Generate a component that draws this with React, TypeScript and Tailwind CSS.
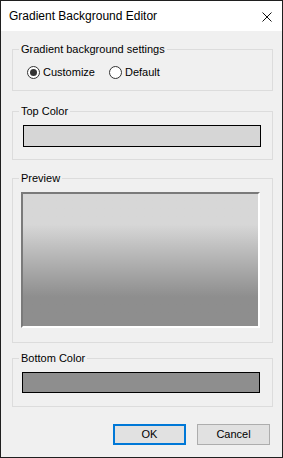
import React from 'react';

function Radio({ checked, label }: { checked?: boolean; label: string }) {
  return (
    <label className="flex items-center gap-[3px]">
      <span className="flex h-[13px] w-[13px] items-center justify-center rounded-full border border-[#333333] bg-white">
        {checked && <span className="h-[7px] w-[7px] rounded-full bg-[#333333]" />}
      </span>
      <span>{label}</span>
    </label>
  );
}

function Group({ title, className, children }: { title: string; className: string; children: React.ReactNode }) {
  return (
    <fieldset className={`w-[261px] border border-[#dcdcdc] px-[6px] ${className}`}>
      <legend className="px-[2px] leading-[14px]">{title}</legend>
      {children}
    </fieldset>
  );
}

export default function App() {
  return (
    <div className="flex h-[458px] w-[283px] flex-col border border-[#1f1f1f] bg-[#f0f0f0] text-[11px] text-black [font-family:'Liberation_Sans',Arial,sans-serif]">
      <div className="flex h-[30px] shrink-0 items-center justify-between bg-white pl-[8px] pr-[10px]">
        <span className="text-[12px]">Gradient Background Editor</span>
        <svg width="10" height="10" viewBox="0 0 10 10" className="mt-[1px]">
          <path d="M0.5 0.5 L9.5 9.5 M9.5 0.5 L0.5 9.5" stroke="#111" strokeWidth="1" />
        </svg>
      </div>

      <div className="flex flex-col pl-[11px]">
        <Group title="Gradient background settings" className="mt-[11px] h-[49px]">
          <div className="ml-[8px] mt-[8px] flex items-center gap-[14px]">
            <Radio checked label="Customize" />
            <Radio label="Default" />
          </div>
        </Group>

        <Group title="Top Color" className="mt-[13px] h-[56px]">
          <div className="ml-[4px] mt-[7px] h-[22px] w-[238px] border border-black bg-[#d6d6d6]" />
        </Group>

        <Group title="Preview" className="mt-[11px] h-[172px]">
          <div className="ml-[2px] mt-[7px] h-[136px] w-[239px] border-2 border-t-[#7a7a7a] border-l-[#7a7a7a] border-b-white border-r-white bg-linear-to-b from-[#d7d7d7] from-23% to-[#8e8e8e] to-78%" />
        </Group>

        <Group title="Bottom Color" className="mt-[8px] h-[56px]">
          <div className="ml-[3px] mt-[7px] h-[21px] w-[238px] border border-black bg-[#8e8e8e]" />
        </Group>
      </div>

      <div className="mt-[17px] flex justify-end gap-[11px] pr-[12px]">
        <button className="h-[21px] w-[73px] border-2 border-[#0078d7] bg-[#e1e1e1] text-[11px]">OK</button>
        <button className="h-[21px] w-[73px] border border-[#adadad] bg-[#e1e1e1] text-[11px]">Cancel</button>
      </div>
    </div>
  );
}
